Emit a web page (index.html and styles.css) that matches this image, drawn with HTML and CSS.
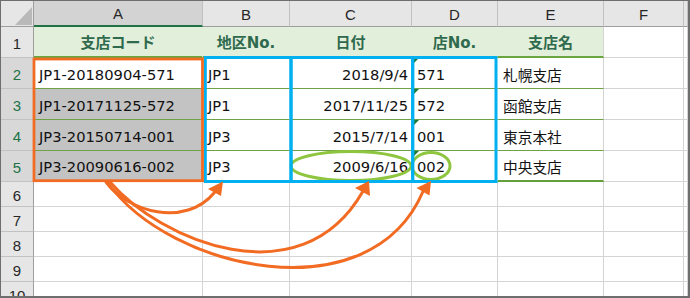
FILE: index.html
```html
<!DOCTYPE html>
<html lang="ja">
<head>
<meta charset="utf-8">
<title>Sheet</title>
<link rel="stylesheet" href="styles.css">
</head>
<body>
<div class="sheet">
  <div class="grid">
    <div class="corner"><svg class="corner-tri" width="33" height="26" viewBox="0 0 33 26"><polygon points="31,6 31,24 14,24" fill="#b9b9b9"/></svg></div>
    <div class="ch sel">A</div>
    <div class="ch">B</div>
    <div class="ch">C</div>
    <div class="ch">D</div>
    <div class="ch">E</div>
    <div class="ch">F</div>
    <div class="ch"></div>

    <div class="rh">1</div>
    <div class="c t hd">支店コード</div>
    <div class="c t hd">地区No.</div>
    <div class="c t hd">日付</div>
    <div class="c t hd">店No.</div>
    <div class="c t hd e">支店名</div>
    <div class="c"></div>
    <div class="c"></div>

    <div class="rh sel">2</div>
    <div class="c t v">JP1-20180904-571</div>
    <div class="c t v">JP1</div>
    <div class="c t v r">2018/9/4</div>
    <div class="c t v d">571</div>
    <div class="c t v e">札幌支店</div>
    <div class="c"></div>
    <div class="c"></div>

    <div class="rh sel">3</div>
    <div class="c t v g">JP1-20171125-572</div>
    <div class="c t v">JP1</div>
    <div class="c t v r">2017/11/25</div>
    <div class="c t v d">572</div>
    <div class="c t v e">函館支店</div>
    <div class="c"></div>
    <div class="c"></div>

    <div class="rh sel">4</div>
    <div class="c t v g">JP3-20150714-001</div>
    <div class="c t v">JP3</div>
    <div class="c t v r">2015/7/14</div>
    <div class="c t v d">001</div>
    <div class="c t v e">東京本社</div>
    <div class="c"></div>
    <div class="c"></div>

    <div class="rh sel">5</div>
    <div class="c t v g last">JP3-20090616-002</div>
    <div class="c t v last">JP3</div>
    <div class="c t v r last">2009/6/16</div>
    <div class="c t v d last">002</div>
    <div class="c t v e last">中央支店</div>
    <div class="c"></div>
    <div class="c"></div>

    <div class="rh">6</div>
    <div class="c"></div><div class="c"></div><div class="c"></div><div class="c"></div><div class="c"></div><div class="c"></div><div class="c"></div>
    <div class="rh">7</div>
    <div class="c"></div><div class="c"></div><div class="c"></div><div class="c"></div><div class="c"></div><div class="c"></div><div class="c"></div>
    <div class="rh">8</div>
    <div class="c"></div><div class="c"></div><div class="c"></div><div class="c"></div><div class="c"></div><div class="c"></div><div class="c"></div>
    <div class="rh">9</div>
    <div class="c"></div><div class="c"></div><div class="c"></div><div class="c"></div><div class="c"></div><div class="c"></div><div class="c"></div>
    <div class="rh">10</div>
    <div class="c"></div><div class="c"></div><div class="c"></div><div class="c"></div><div class="c"></div><div class="c"></div><div class="c"></div>
  </div>

  <svg class="overlay" width="690" height="298" viewBox="0 0 690 298">
    <g fill="none" stroke-width="3">
      <ellipse cx="351" cy="166" rx="60" ry="14.5" stroke="#8fc640"/>
      <ellipse cx="431" cy="166" rx="19" ry="13.5" stroke="#8fc640"/>
      <rect x="205.3" y="57.5" width="85.7" height="124" stroke="#00b0f0"/>
      <rect x="291" y="57.5" width="121.7" height="124" stroke="#00b0f0"/>
      <rect x="412.7" y="57.5" width="83.3" height="124" stroke="#00b0f0"/>
      <rect x="34" y="59" width="168.5" height="121.7" stroke="#f26b22" stroke-width="2.8"/>
      <g stroke="#f26b22" stroke-linecap="round">
        <path d="M106,182 C128,212 185,228 214.5,192.5"/>
        <path d="M110,182 C160,240 300,300 362.5,192"/>
        <path d="M108,183 C170,270 370,315 423,191.5"/>
      </g>
    </g>
    <g fill="#f26b22">
      <polygon points="208,189 223,181.5 221,196"/>
      <polygon points="355,188 369,181 370,196"/>
      <polygon points="416.5,188 431,181 429.5,195.5"/>
    </g>
  </svg>
</div>
</body>
</html>
```

FILE: styles.css
```css
html, body {
  margin: 0;
  padding: 0;
  background: #ffffff;
}

.sheet {
  position: relative;
  width: 690px;
  height: 298px;
  box-sizing: border-box;
  border-style: solid;
  border-color: #6e6e6e;
  border-width: 1px 2px 2px 1px;
  overflow: hidden;
  background: #ffffff;
}

.grid {
  display: grid;
  grid-template-columns: 33px 169px 87px 122px 86px 106px 80px 4px;
  grid-template-rows: 26px repeat(5, 31px) repeat(5, 25px);
}

.corner {
  box-sizing: border-box;
  background: #e6e6e6;
  border-right: 1px solid #9e9e9e;
  border-bottom: 1px solid #9e9e9e;
  position: relative;
}

.corner-tri {
  display: block;
}

.ch {
  box-sizing: border-box;
  background: #e6e6e6;
  border-right: 1px solid #c2c2c2;
  border-bottom: 1px solid #9e9e9e;
  display: flex;
  align-items: center;
  justify-content: center;
  font-family: "Liberation Sans", Arial, sans-serif;
  font-size: 15px;
  color: #262626;
  padding-top: 1px;
}

.ch.sel {
  background: #d3d3d3;
  border-bottom: 2px solid #217346;
}

.rh {
  box-sizing: border-box;
  background: #e6e6e6;
  border-right: 1px solid #9e9e9e;
  border-bottom: 1px solid #c2c2c2;
  display: flex;
  align-items: center;
  justify-content: center;
  font-family: "Liberation Sans", Arial, sans-serif;
  font-size: 15px;
  color: #262626;
  padding-top: 2px;
}

.rh.sel {
  background: #d8d8d8;
  color: #217346;
}

.c {
  box-sizing: border-box;
  border-right: 1px solid #d4d4d4;
  border-bottom: 1px solid #d4d4d4;
  min-width: 0;
}

.t {
  border-right-color: transparent;
  border-bottom: 1px solid #6fa247;
}

.t.e {
  border-right-color: #d4d4d4;
}

.t.last {
  border-bottom: 2px solid #62a03a;
}

.hd {
  background: #e2efda;
  border-bottom: 2px solid #6aa63f;
  display: flex;
  align-items: center;
  justify-content: center;
  font-family: "DejaVu Sans", "Noto Sans CJK JP", sans-serif;
  font-weight: bold;
  font-size: 15px;
  color: #2f6a4e;
  white-space: nowrap;
}

.v {
  display: flex;
  align-items: center;
  padding: 2px 4px 0 5px;
  font-family: "DejaVu Sans", "Noto Sans CJK JP", sans-serif;
  font-size: 14.7px;
  color: #111111;
  white-space: nowrap;
}

.v.r {
  justify-content: flex-end;
  padding-right: 3px;
}

.v.g {
  background: #c3c3c3;
}

.v.d {
  position: relative;
}

.v.d::before {
  content: "";
  position: absolute;
  left: 2px;
  top: 0;
  border-top: 5px solid #1f7a35;
  border-right: 5px solid transparent;
}

.overlay {
  position: absolute;
  left: -1px;
  top: -1px;
  pointer-events: none;
}
```
